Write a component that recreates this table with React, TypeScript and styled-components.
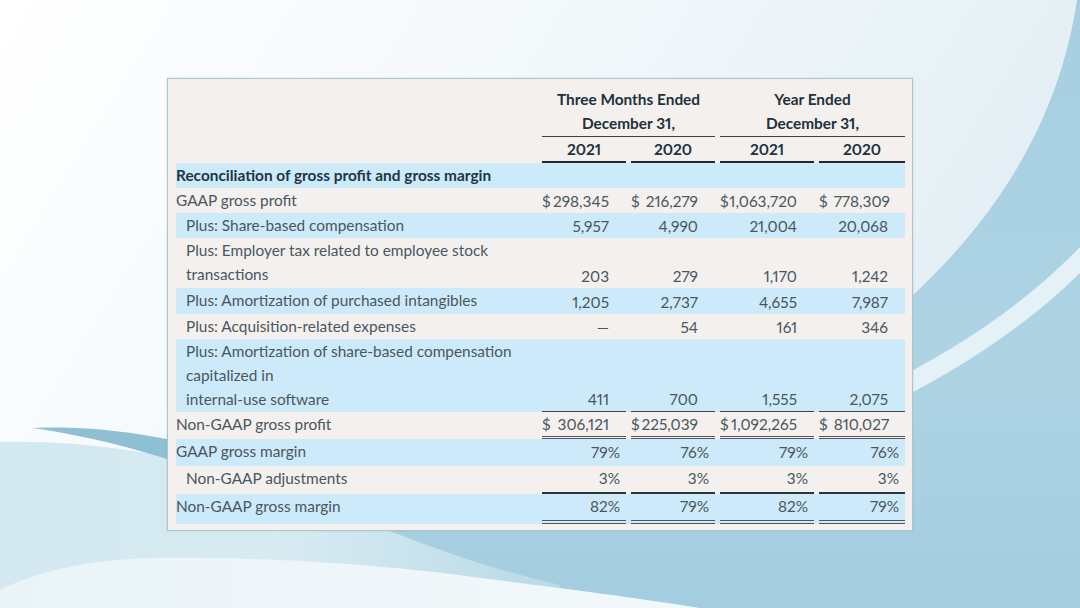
import React from "react";
import styled, { createGlobalStyle } from "styled-components";

const GlobalStyle = createGlobalStyle`
  html, body { margin: 0; padding: 0; }
  body {
    width: 1080px;
    height: 608px;
    overflow: hidden;
    font-family: Lato, "Noto Sans", sans-serif;
  }
  * { box-sizing: border-box; }
`;

const Stage = styled.div`
  position: relative;
  width: 1080px;
  height: 608px;
  overflow: hidden;
  display: flex;
  align-items: center;
  justify-content: center;
  background: #f6fafc;
`;

const Backdrop = styled.svg`
  position: absolute;
  inset: 0;
  width: 100%;
  height: 100%;
`;

const Panel = styled.div`
  position: relative;
  width: 746px;
  border: 1px solid #a8c6d4;
  background: #f3f0ee;
  padding: 8px 7px 6px 8px;
  box-shadow: 0 0 2px rgba(120, 160, 180, 0.35);
`;

const Row = styled.div<{ $tone?: "blue" | "plain"; $h?: number }>`
  display: grid;
  grid-template-columns: 361px 84px 84px 94px 86px;
  column-gap: 5px;
  min-height: ${(p) => (p.$h ? `${p.$h}px` : "0")};
  background: ${(p) => (p.$tone === "blue" ? "#cdeafa" : "transparent")};
  color: #4a575e;
  font-size: 15.4px;
  line-height: 24px;
  font-variant-numeric: proportional-nums;
`;

const HeadCell = styled.div<{ $span?: number; $rule?: "thin" | "thick" }>`
  grid-column: span ${(p) => p.$span ?? 1};
  text-align: center;
  font-weight: 700;
  color: #1e323d;
  padding-bottom: ${(p) => (p.$rule === "thin" ? "1px" : "0")};
  border-bottom: ${(p) =>
    p.$rule === "thin" ? "1px solid #3b4246" : p.$rule === "thick" ? "2px solid #23292c" : "none"};
`;

const Label = styled.div<{ $indent?: boolean; $bold?: boolean }>`
  display: flex;
  flex-direction: column;
  justify-content: flex-start;
  padding: 0.5px 0 0.5px ${(p) => (p.$indent ? "10px" : "0")};
  font-weight: ${(p) => (p.$bold ? 700 : 400)};
  color: ${(p) => (p.$bold ? "#203743" : "#4a575e")};
  white-space: nowrap;
`;

type Rule = "none" | "single" | "thick" | "double" | "bigdouble";

const ruleCss = (r: Rule) => {
  switch (r) {
    case "single":
      return "1px solid #3d4448";
    case "thick":
      return "2px solid #2f3538";
    case "double":
      return "3px double #4f575b";
    case "bigdouble":
      return "4px double #4f575b";
    default:
      return "none";
  }
};

const Num = styled.div<{ $rule?: Rule; $pct?: boolean }>`
  display: flex;
  align-items: flex-end;
  justify-content: space-between;
  padding-right: ${(p) => (p.$pct ? "6px" : "17px")};
  padding-bottom: ${(p) => (p.$pct ? "2px" : "0")};
  border-bottom: ${(p) => ruleCss(p.$rule ?? "none")};
  white-space: nowrap;
`;

const Dollar = styled.span<{ $gap?: boolean }>`
  margin-right: ${(p) => (p.$gap ? "6px" : "0")};
`;

const Value = styled.span`
  margin-left: auto;
`;

type Cell = { v: string; d?: boolean };

type BodyRow = {
  label: React.ReactNode;
  indent?: boolean;
  bold?: boolean;
  tone: "blue" | "plain";
  h: number;
  cells?: Cell[];
  rule?: Rule;
  pct?: boolean;
};

const rows: BodyRow[] = [
  { label: "Reconciliation of gross profit and gross margin", bold: true, tone: "blue", h: 25 },
  {
    label: "GAAP gross profit",
    tone: "plain",
    h: 25,
    cells: [
      { v: "298,345", d: true },
      { v: "216,279", d: true },
      { v: "1,063,720", d: true },
      { v: "778,309", d: true },
    ],
  },
  {
    label: "Plus: Share-based compensation",
    indent: true,
    tone: "blue",
    h: 25,
    cells: [{ v: "5,957" }, { v: "4,990" }, { v: "21,004" }, { v: "20,068" }],
  },
  {
    label: (
      <>
        <span>Plus: Employer tax related to employee stock</span>
        <span>transactions</span>
      </>
    ),
    indent: true,
    tone: "plain",
    h: 50,
    cells: [{ v: "203" }, { v: "279" }, { v: "1,170" }, { v: "1,242" }],
  },
  {
    label: "Plus: Amortization of purchased intangibles",
    indent: true,
    tone: "blue",
    h: 26,
    cells: [{ v: "1,205" }, { v: "2,737" }, { v: "4,655" }, { v: "7,987" }],
  },
  {
    label: "Plus: Acquisition-related expenses",
    indent: true,
    tone: "plain",
    h: 25,
    cells: [{ v: "—" }, { v: "54" }, { v: "161" }, { v: "346" }],
  },
  {
    label: (
      <>
        <span>Plus: Amortization of share-based compensation</span>
        <span>capitalized in</span>
        <span>internal-use software</span>
      </>
    ),
    indent: true,
    tone: "blue",
    h: 73,
    rule: "single",
    cells: [{ v: "411" }, { v: "700" }, { v: "1,555" }, { v: "2,075" }],
  },
  {
    label: "Non-GAAP gross profit",
    tone: "plain",
    h: 27,
    rule: "double",
    cells: [
      { v: "306,121", d: true },
      { v: "225,039", d: true },
      { v: "1,092,265", d: true },
      { v: "810,027", d: true },
    ],
  },
  {
    label: "GAAP gross margin",
    tone: "blue",
    h: 27,
    pct: true,
    cells: [{ v: "79%" }, { v: "76%" }, { v: "79%" }, { v: "76%" }],
  },
  {
    label: "Non-GAAP adjustments",
    indent: true,
    tone: "plain",
    h: 26,
    pct: true,
    rule: "thick",
    cells: [{ v: "3%" }, { v: "3%" }, { v: "3%" }, { v: "3%" }],
  },
  {
    label: "Non-GAAP gross margin",
    tone: "blue",
    h: 30,
    pct: true,
    rule: "bigdouble",
    cells: [{ v: "82%" }, { v: "79%" }, { v: "82%" }, { v: "79%" }],
  },
];

const Background = () => (
  <Backdrop viewBox="0 0 1080 608" preserveAspectRatio="none">
    <defs>
      <linearGradient id="base" x1="0" y1="0" x2="1" y2="0.35">
        <stop offset="0" stopColor="#ffffff" />
        <stop offset="0.55" stopColor="#f1f7fa" />
        <stop offset="1" stopColor="#e1eef4" />
      </linearGradient>
      <linearGradient id="deep" x1="0" y1="0" x2="0" y2="1">
        <stop offset="0" stopColor="#a6cfe1" />
        <stop offset="0.6" stopColor="#aed4e4" />
        <stop offset="1" stopColor="#a3cde0" />
      </linearGradient>
      <linearGradient id="light" x1="0" y1="0" x2="1" y2="0">
        <stop offset="0" stopColor="#d3e8f1" />
        <stop offset="0.5" stopColor="#d8ebf2" />
        <stop offset="1" stopColor="#b9dae7" />
      </linearGradient>
      <linearGradient id="foam" x1="0" y1="0" x2="1" y2="0">
        <stop offset="0" stopColor="#eaf4f8" />
        <stop offset="1" stopColor="#f3f8fa" />
      </linearGradient>
    </defs>
    <rect x="0" y="0" width="1080" height="608" fill="url(#base)" />
    <path
      d="M1077,0 C1062,100 1015,200 913,295 C820,380 640,470 330,520 L330,608 L1080,608 L1080,0 Z"
      fill="url(#deep)"
    />
    <path d="M870,392 Q1000,330 1080,247 L1080,273 Q1000,352 870,414 Z" fill="#e4f1f6" />
    <path
      d="M0,442 C90,440 190,455 280,488 C360,518 450,560 560,585 L560,608 L0,608 Z"
      fill="url(#light)"
    />
    <path
      d="M32,428 C80,426 130,430 200,446 L200,470 C150,452 90,436 32,428 Z"
      fill="#8fbfd3"
    />
    <path
      d="M0,590 C40,570 90,560 150,558 C260,556 380,565 450,574 C560,588 640,598 700,608 L0,608 Z"
      fill="url(#foam)"
    />
  </Backdrop>
);

const gapped = new Set(["216,279", "778,309", "306,121", "810,027"]);

export default function App() {
  return (
    <Stage>
      <GlobalStyle />
      <Background />
      <Panel>
        <Row>
          <div />
          <HeadCell $span={2}>Three Months Ended</HeadCell>
          <HeadCell $span={2}>Year Ended</HeadCell>
        </Row>
        <Row>
          <div />
          <HeadCell $span={2} $rule="thin">
            December 31,
          </HeadCell>
          <HeadCell $span={2} $rule="thin">
            December 31,
          </HeadCell>
        </Row>
        <Row>
          <div />
          <HeadCell $rule="thick">2021</HeadCell>
          <HeadCell $rule="thick">2020</HeadCell>
          <HeadCell $rule="thick">2021</HeadCell>
          <HeadCell $rule="thick">2020</HeadCell>
        </Row>
        {rows.map((r, i) => (
          <Row key={i} $tone={r.tone} $h={r.h}>
            <Label $indent={r.indent} $bold={r.bold}>
              {r.label}
            </Label>
            {(r.cells ?? [null, null, null, null]).map((c, j) => (
              <Num key={j} $rule={r.rule} $pct={r.pct}>
                {c?.d && <Dollar $gap={gapped.has(c.v)}>$</Dollar>}
                {c && <Value>{c.v}</Value>}
              </Num>
            ))}
          </Row>
        ))}
      </Panel>
    </Stage>
  );
}
